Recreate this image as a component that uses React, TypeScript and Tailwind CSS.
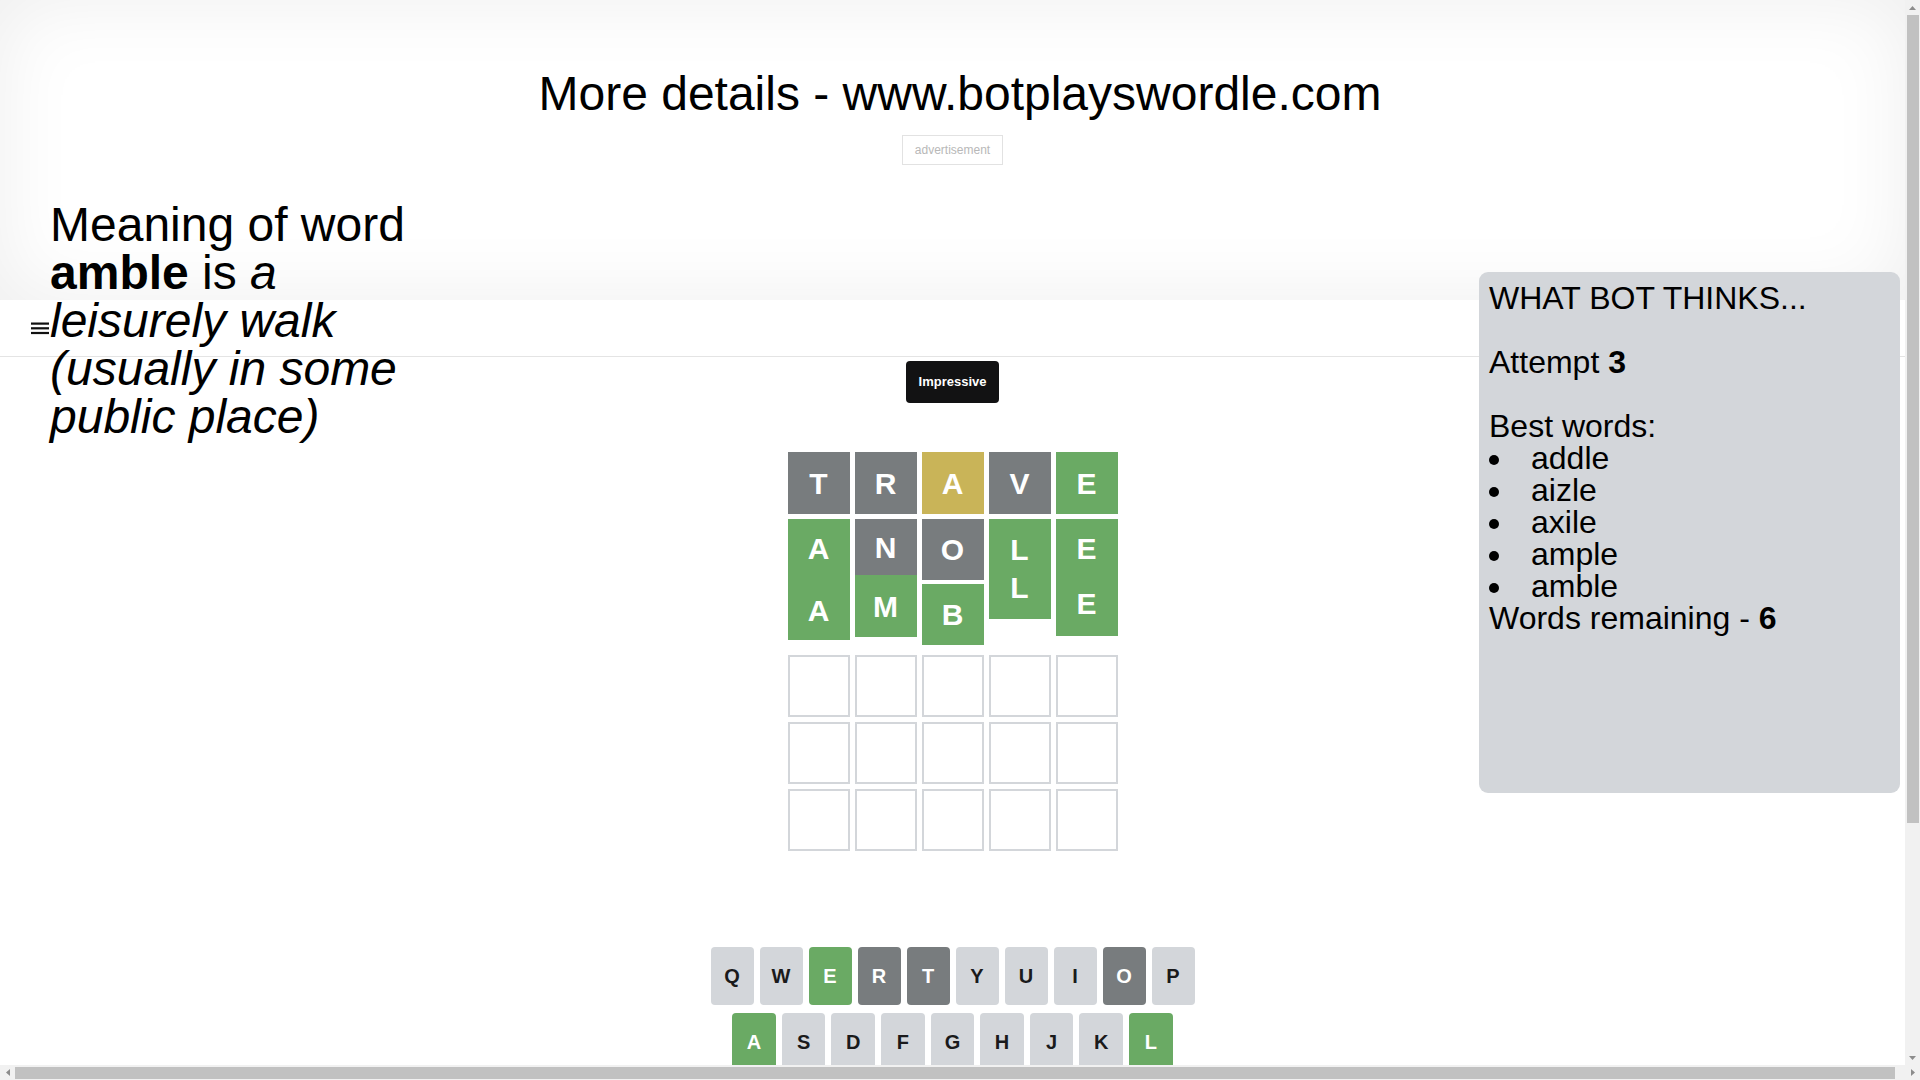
import { Delete } from "lucide-react";

type Tone = "green" | "gray" | "yellow" | "none";

const tileTone: Record<Tone, string> = {
  green: "bg-[#6aaa64] text-white",
  gray: "bg-[#787c7e] text-white",
  yellow: "bg-[#c9b458] text-white",
  none: "bg-white border-2 border-[#d3d6da]",
};

const keyTone: Record<Tone, string> = {
  green: "bg-[#6aaa64] text-white",
  gray: "bg-[#787c7e] text-white",
  yellow: "bg-[#c9b458] text-white",
  none: "bg-[#d3d6da] text-[#1a1a1b]",
};

const firstRow: [string, Tone][] = [
  ["T", "gray"],
  ["R", "gray"],
  ["A", "yellow"],
  ["V", "gray"],
  ["E", "green"],
];

const used: Record<string, Tone> = {
  E: "green",
  A: "green",
  L: "green",
  M: "green",
  B: "green",
  R: "gray",
  T: "gray",
  O: "gray",
  V: "gray",
  N: "gray",
};

const bestWords = ["addle", "aizle", "axile", "ample", "amble"];

function Tile({ letter, tone }: { letter?: string; tone: Tone }) {
  return (
    <div
      className={`flex h-[62px] w-[62px] items-center justify-center text-[30px] font-bold ${tileTone[tone]}`}
    >
      {letter}
    </div>
  );
}

function Key({ label, last, wide }: { label: string; last?: boolean; wide?: boolean }) {
  const tone = used[label] ?? "none";
  return (
    <button
      type="button"
      className={`flex h-[58px] items-center justify-center rounded-[4px] font-bold ${
        wide ? "flex-[1.5] text-[12px]" : "flex-1 text-[20px]"
      } ${last ? "" : "mr-[6px]"} ${keyTone[tone]}`}
    >
      {label === "DEL" ? <Delete className="h-6 w-6" /> : label}
    </button>
  );
}

function Board() {
  return (
    <div className="mx-auto mt-[49px] flex w-[330px] flex-col gap-[5px]">
      <div className="flex gap-[5px]">
        {firstRow.map(([l, t], i) => (
          <Tile key={i} letter={l} tone={t} />
        ))}
      </div>

      {/* rows 2 and 3 caught mid flip */}
      <div className="flex h-[131px] items-start gap-[5px] text-[30px] font-bold text-white">
        <div className="flex h-[121px] w-[62px] flex-col items-center bg-[#6aaa64]">
          <span className="flex h-[58px] items-center">A</span>
          <span className="mt-[4px] flex h-[58px] items-center">A</span>
        </div>
        <div className="flex w-[62px] flex-col">
          <div className="flex h-[56px] items-center justify-center bg-[#787c7e]">N</div>
          <div className="flex h-[62px] items-center justify-center bg-[#6aaa64]">M</div>
        </div>
        <div className="flex w-[62px] flex-col">
          <div className="flex h-[61px] items-center justify-center bg-[#787c7e]">O</div>
          <div className="mt-[4px] flex h-[61px] items-center justify-center bg-[#6aaa64]">B</div>
        </div>
        <div className="flex h-[100px] w-[62px] flex-col items-center justify-center bg-[#6aaa64] leading-[38px]">
          <span>L</span>
          <span>L</span>
        </div>
        <div className="flex h-[117px] w-[62px] flex-col items-center bg-[#6aaa64] pt-[2px]">
          <span className="flex h-[55px] items-center">E</span>
          <span className="flex h-[55px] items-center">E</span>
        </div>
      </div>

      {[0, 1, 2].map((r) => (
        <div key={r} className="flex gap-[5px]">
          {[0, 1, 2, 3, 4].map((c) => (
            <Tile key={c} tone="none" />
          ))}
        </div>
      ))}
    </div>
  );
}

function Keyboard() {
  const top = "QWERTYUIOP".split("");
  const mid = "ASDFGHJKL".split("");
  const bottom = "ZXCVBNM".split("");
  return (
    <div className="mx-auto mt-[96px] flex w-[484px] flex-col gap-[8px]">
      <div className="flex">
        {top.map((k, i) => (
          <Key key={k} label={k} last={i === top.length - 1} />
        ))}
      </div>
      <div className="flex">
        <div className="flex-[0.5]" />
        {mid.map((k, i) => (
          <Key key={k} label={k} last={i === mid.length - 1} />
        ))}
        <div className="flex-[0.5]" />
      </div>
      <div className="flex">
        <Key label="ENTER" wide />
        {bottom.map((k) => (
          <Key key={k} label={k} />
        ))}
        <Key label="DEL" wide last />
      </div>
    </div>
  );
}

function Arrow({ dir }: { dir: "up" | "down" | "left" | "right" }) {
  const pts = {
    up: "0,4 7,4 3.5,0",
    down: "0,0 7,0 3.5,4",
    left: "4,0 4,7 0,3.5",
    right: "0,0 0,7 4,3.5",
  }[dir];
  const vertical = dir === "up" || dir === "down";
  return (
    <div className="flex h-[15px] w-[15px] shrink-0 items-center justify-center">
      <svg width={vertical ? 7 : 4} height={vertical ? 4 : 7} fill="#8c8c8c">
        <polygon points={pts} />
      </svg>
    </div>
  );
}

export default function App() {
  return (
    <div className="flex h-[1080px] w-[1920px] flex-col overflow-hidden bg-[#f1f1f1] font-['Liberation_Sans',Arial,sans-serif] text-black">
      <div className="flex h-[1065px]">
        <main className="relative h-[1065px] w-[1905px] shrink-0 overflow-hidden bg-white">
          {/* Header */}
          <div className="h-[300px] w-full shadow-[inset_0_0_80px_rgba(0,0,0,0.07)]">
            <h1 className="w-[1920px] pt-[70px] text-center text-[48px] leading-[48px] font-normal">
              More details - www.botplayswordle.com
            </h1>
            <div className="mt-[17px] flex justify-center">
              <div className="border border-[#e2e2e2] bg-white px-[12px] py-[7px] text-[12px] leading-[14px] text-[#b8b8b8]">
                advertisement
              </div>
            </div>
          </div>

          {/* Nav */}
          <div className="flex h-[57px] items-center border-b border-[#e4e4e4] bg-white pl-[31px]">
            <svg width="18" height="13" viewBox="0 0 18 13" fill="#111">
              <rect x="0" y="0.5" width="18" height="2.2" />
              <rect x="0" y="5.2" width="18" height="2.2" />
              <rect x="0" y="9.9" width="18" height="2.2" />
            </svg>
          </div>

          {/* Toast */}
          <div className="mt-[4px] flex justify-center">
            <div className="flex h-[42px] w-[93px] items-center justify-center rounded-[4px] bg-[#121213] text-[13px] font-bold text-white">
              Impressive
            </div>
          </div>

          <Board />
          <Keyboard />

          {/* Word meaning */}
          <div className="absolute left-[50px] top-[201px] w-[380px] text-[48px] leading-[48px]">
            Meaning of word <b>amble</b> is <i>a leisurely walk (usually in some public place)</i>
          </div>

          {/* Bot panel */}
          <div className="absolute right-[5px] top-[272px] h-[521px] w-[421px] rounded-[9px] bg-[#d3d6da] p-[10px] text-[32px] leading-[32px]">
            <div>WHAT BOT THINKS...</div>
            <div className="h-[32px]" />
            <div>
              Attempt <b>3</b>
            </div>
            <div className="h-[32px]" />
            <div>Best words:</div>
            <ul>
              {bestWords.map((w) => (
                <li key={w} className="flex">
                  <span className="w-[42px] shrink-0 pt-[13px]">
                    <span className="block h-[10px] w-[10px] rounded-full bg-black" />
                  </span>
                  {w}
                </li>
              ))}
            </ul>
            <div>
              Words remaining - <b>6</b>
            </div>
          </div>
        </main>

        {/* vertical scrollbar */}
        <div className="flex w-[15px] flex-col items-center bg-[#f1f1f1]">
          <Arrow dir="up" />
          <div className="h-[808px] w-[12px] bg-[#c1c1c1]" />
          <div className="flex-1" />
          <Arrow dir="down" />
        </div>
      </div>

      {/* horizontal scrollbar */}
      <div className="flex h-[15px] items-center bg-[#f1f1f1]">
        <Arrow dir="left" />
        <div className="h-[12px] w-[1880px] bg-[#c1c1c1]" />
        <div className="flex-1" />
        <Arrow dir="right" />
      </div>
    </div>
  );
}
